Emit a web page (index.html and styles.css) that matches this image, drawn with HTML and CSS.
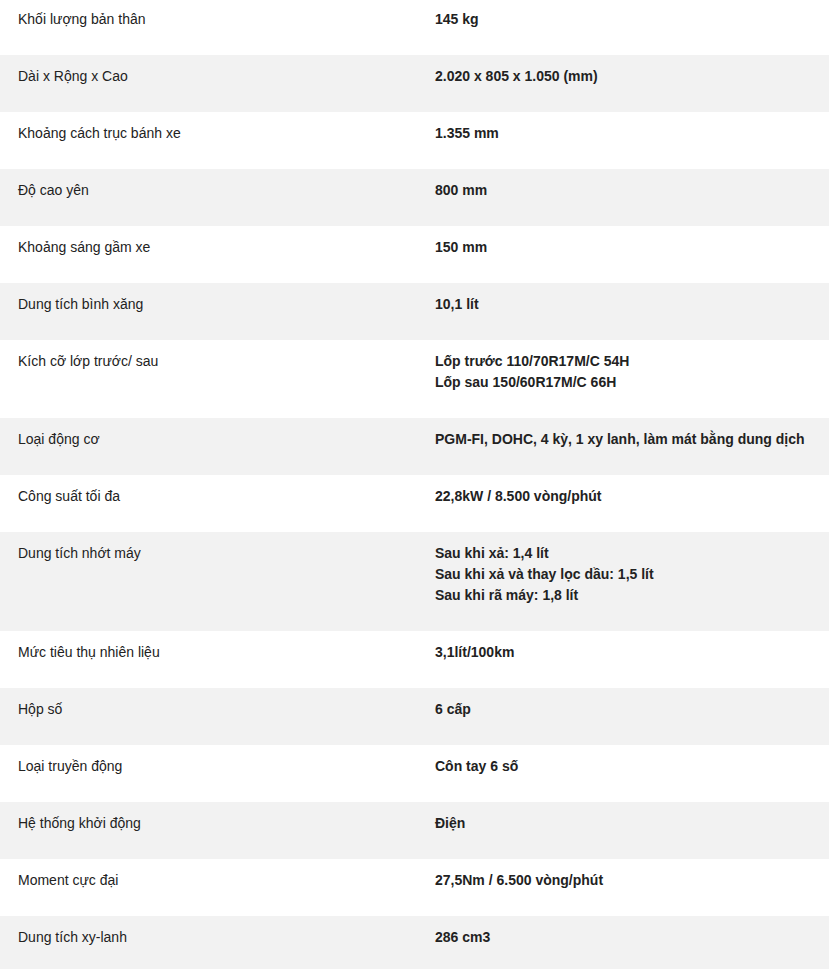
FILE: index.html
```html
<!DOCTYPE html>
<html lang="vi">
<head>
<meta charset="utf-8">
<link rel="stylesheet" href="styles.css">
</head>
<body>
<div class="specs">
  <div class="row"><div class="label">Khối lượng bản thân</div><div class="value">145 kg</div></div>
  <div class="row"><div class="label">Dài x Rộng x Cao</div><div class="value">2.020 x 805 x 1.050 (mm)</div></div>
  <div class="row"><div class="label">Khoảng cách trục bánh xe</div><div class="value">1.355 mm</div></div>
  <div class="row"><div class="label">Độ cao yên</div><div class="value">800 mm</div></div>
  <div class="row"><div class="label">Khoảng sáng gầm xe</div><div class="value">150 mm</div></div>
  <div class="row"><div class="label">Dung tích bình xăng</div><div class="value">10,1 lít</div></div>
  <div class="row"><div class="label">Kích cỡ lớp trước/ sau</div><div class="value">Lốp trước 110/70R17M/C 54H<br>Lốp sau 150/60R17M/C 66H</div></div>
  <div class="row"><div class="label">Loại động cơ</div><div class="value">PGM-FI, DOHC, 4 kỳ, 1 xy lanh, làm mát bằng dung dịch</div></div>
  <div class="row"><div class="label">Công suất tối đa</div><div class="value">22,8kW / 8.500 vòng/phút</div></div>
  <div class="row"><div class="label">Dung tích nhớt máy</div><div class="value">Sau khi xả: 1,4 lít<br>Sau khi xả và thay lọc dầu: 1,5 lít<br>Sau khi rã máy: 1,8 lít</div></div>
  <div class="row"><div class="label">Mức tiêu thụ nhiên liệu</div><div class="value">3,1lít/100km</div></div>
  <div class="row"><div class="label">Hộp số</div><div class="value">6 cấp</div></div>
  <div class="row"><div class="label">Loại truyền động</div><div class="value">Côn tay 6 số</div></div>
  <div class="row"><div class="label">Hệ thống khởi động</div><div class="value">Điện</div></div>
  <div class="row"><div class="label">Moment cực đại</div><div class="value">27,5Nm / 6.500 vòng/phút</div></div>
  <div class="row"><div class="label">Dung tích xy-lanh</div><div class="value">286 cm3</div></div>
</div>
</body>
</html>
```
FILE: styles.css
```css
html, body {
  margin: 0;
  padding: 0;
  background: #ffffff;
}
body {
  font-family: "Liberation Sans", Arial, sans-serif;
  font-size: 14px;
  line-height: 21px;
  color: #222222;
}
.specs {
  margin-top: -2px;
}
.row {
  display: grid;
  grid-template-columns: 417px 1fr;
  background: #ffffff;
}
.row:nth-child(even) {
  background: #f2f2f2;
}
.label,
.value {
  padding: 11px 18px 25px 18px;
}
.value {
  font-weight: bold;
  padding-right: 8px;
}
```
